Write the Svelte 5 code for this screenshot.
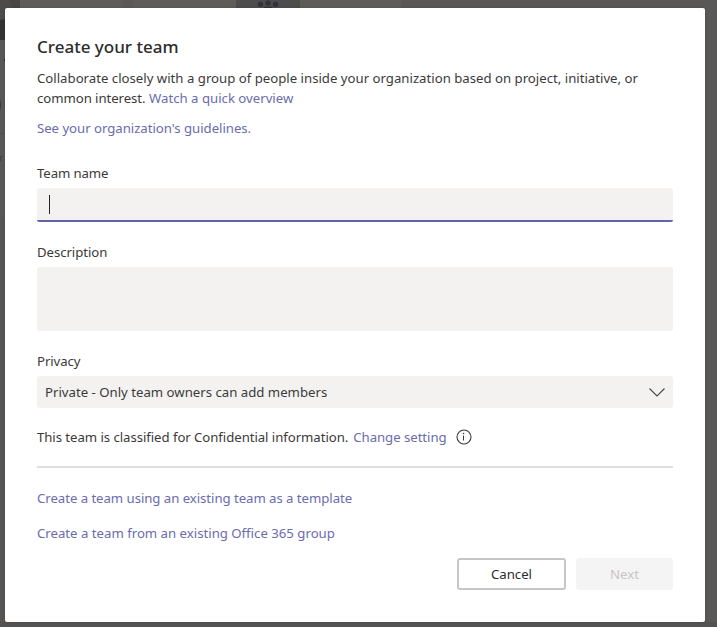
<script>
  let name = $state('');
  let description = $state('');
</script>

<div class="backdrop">
  <svg class="behind" width="717" height="627" viewBox="0 0 717 627" aria-hidden="true">
    <rect width="717" height="627" fill="#595856" />
    <rect width="382" height="8" x="20" fill="#5d5c59" />
    <rect width="12" height="8" x="122" fill="#5a5957" />
    <rect width="20" height="20" fill="#4d4c4a" />
    <path d="M9 0h11v8h-7z" fill="#484746" />
    <path d="M0 20l5-1v21H0z" fill="#343331" />
    <rect width="64" height="8" x="236" fill="#4d4d4d" />
    <g fill="#32323a">
      <circle cx="260.500" cy="4.300" r="2.600" />
      <circle cx="268" cy="3" r="2.700" />
      <circle cx="275.500" cy="4.300" r="2.600" />
      <path d="M264 8q0-1.300 1.300-1.300h5.400q1.300 0 1.300 1.300z" />
    </g>
    <path d="M4 59h1v2H4z" fill="#32302a" />
    <path d="M0 99q2 6 0 12z" fill="#3b3a38" />
    <path d="M0 133.500h5" stroke="#504f4d" />
    <path d="M0.500 161v-5M1 157q1-1 2-.8" fill="none" stroke="#454442" />
    <rect y="217" width="5" height="410" fill="#565553" />
    <rect y="622" width="717" height="5" fill="#535250" />
  </svg>

  <div class="dialog" role="dialog" aria-labelledby="title">
    <h1 id="title">Create your team</h1>
    <p class="intro">
      <span class="first">Collaborate closely with a group of people inside your organization based on project, initiative, or</span><br />
      <span class="common">common interest.</span> <a class="watch" href="#overview">Watch a quick overview</a>
    </p>
    <a class="guidelines" href="#guidelines">See your organization's guidelines.</a>

    <label class="name-label" for="name">Team name</label>
    <div class="name-field">
      <span class="caret"></span>
      <input id="name" bind:value={name} />
    </div>

    <label class="desc-label" for="description">Description</label>
    <textarea id="description" bind:value={description}></textarea>

    <span class="privacy-label">Privacy</span>
    <button class="select">
      <span>Private - Only team owners can add members</span>
      <svg width="16" height="10" viewBox="0 0 16 10" fill="none" stroke="#484644" stroke-width="1.100">
        <path d="M.5 1.500L8 9 15.500 1.500" />
      </svg>
    </button>

    <div class="classified">
      <span class="info-text">This team is classified for Confidential information.</span>
      <a class="change" href="#change">Change setting</a>
      <svg width="16" height="16" viewBox="0 0 16 16" fill="none" stroke="#3b3a39">
        <circle cx="8" cy="8" r="7" stroke-width="1.100" />
        <path d="M7.500 6.500v5" />
        <circle cx="7.500" cy="4.500" r=".8" fill="#3b3a39" stroke="none" />
      </svg>
    </div>

    <hr />

    <a class="template" href="#template">Create a team using an existing team as a template</a>
    <a class="group" href="#group">Create a team from an existing Office 365 group</a>

    <div class="actions">
      <button class="cancel">Cancel</button>
      <button class="next" disabled>Next</button>
    </div>
  </div>
</div>

<style>
  :global(body) {
    margin: 0;
    overflow: hidden;
  }
  .backdrop {
    position: relative;
    width: 717px;
    height: 627px;
    box-sizing: border-box;
    padding: 8px 12px 5px 5px;
    overflow: hidden;
    font-family: 'Segoe UI', 'Noto Sans', 'Open Sans', sans-serif;
    font-size: 13.2px;
    line-height: 20px;
    color: #3b3a39;
  }
  .behind {
    position: absolute;
    inset: 0;
  }
  .dialog {
    position: relative;
    display: flex;
    flex-direction: column;
    width: 700px;
    height: 614px;
    box-sizing: border-box;
    padding: 26px 32px 32px;
    background: #fff;
    border-radius: 2px;
    box-shadow: 0 0 3px rgba(0, 0, 0, 0.15);
    white-space: nowrap;
  }
  .dialog > * {
    flex-shrink: 0;
  }
  h1 {
    margin: 0;
    height: 34px;
    line-height: 26px;
    font-size: 17px;
    font-weight: 500;
    color: #2d2c2b;
  }
  p {
    margin: 0 0 10px;
    height: 40px;
  }
  a {
    color: #6a6cae;
    text-decoration: none;
  }
  .common {
    letter-spacing: -0.06px;
  }
  .guidelines {
    height: 20px;
    letter-spacing: -0.03px;
  }
  .name-label {
    margin-top: 25px;
    height: 25px;
    letter-spacing: -0.1px;
  }
  .name-field {
    display: flex;
    align-items: center;
    height: 34px;
    box-sizing: border-box;
    padding-left: 12px;
    background: #f3f2f1;
    border-bottom: 2px solid #6264a7;
    border-radius: 3px 3px 2px 2px;
  }
  .caret {
    width: 1px;
    height: 19px;
    margin-top: 1px;
    background: #252423;
  }
  input {
    flex: 1;
    border: 0;
    outline: 0;
    background: transparent;
  }
  .desc-label {
    margin-top: 20px;
    height: 25px;
    letter-spacing: -0.06px;
  }
  textarea {
    height: 64px;
    box-sizing: border-box;
    border: 0;
    border-radius: 3px;
    background: #f3f2f1;
    resize: none;
  }
  .privacy-label {
    margin-top: 20px;
    height: 25px;
    letter-spacing: -0.1px;
  }
  button {
    box-sizing: border-box;
    height: 32px;
    border: 0;
    border-radius: 3px;
    font: inherit;
    color: inherit;
  }
  .select {
    display: flex;
    align-items: center;
    justify-content: space-between;
    padding: 0 8px;
    background: #f3f2f1;
  }
  .classified {
    display: flex;
    align-items: center;
    height: 20px;
    margin-top: 19px;
  }
  .info-text {
    letter-spacing: -0.055px;
  }
  .change {
    margin: 0 9px 0 5px;
    letter-spacing: -0.04px;
  }
  hr {
    width: 100%;
    height: 2px;
    margin: 19px 0 20px;
    border: 0;
    background: #e1dfdd;
  }
  .template {
    height: 35px;
    letter-spacing: -0.045px;
  }
  .group {
    height: 35px;
  }
  .actions {
    display: flex;
    justify-content: flex-end;
    gap: 10px;
  }
  .cancel {
    width: 109px;
    border: 2px solid #c8c6c4;
    background: #fff;
    color: #2d2c2b;
  }
  .next {
    width: 97px;
    background: #f4f4f4;
    color: #c8c6c4;
  }
</style>
